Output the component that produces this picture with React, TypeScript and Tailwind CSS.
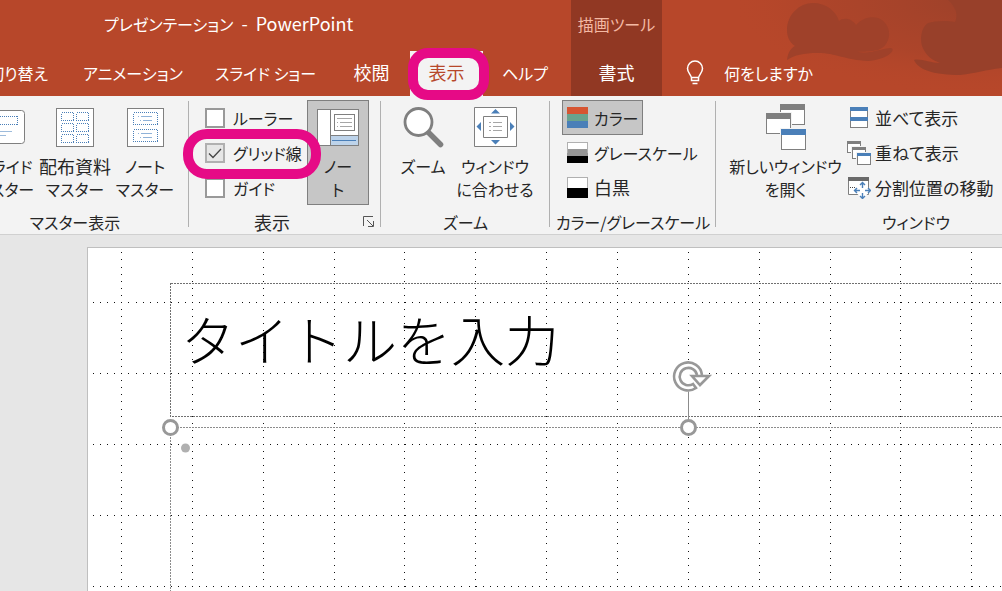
import type { ReactNode } from "react";
import clsx from "clsx";

const GRAY = "#7f7f7f";
const BLUE = "#4a7fb8";

const tabs = [
  { label: "切り替え", width: "w-[68px] justify-end pr-5" },
  { label: "アニメーション", width: "w-[130px] justify-center" },
  { label: "スライド ショー", width: "w-[135px] justify-center" },
  { label: "校閲", width: "w-[77px] justify-center" },
  { label: "表示", width: "w-[73px] justify-center", active: true },
  { label: "ヘルプ", width: "w-[84px] justify-center" },
];

// Labels made of kanji alone are set a step larger than those with kana.
function labelSize(label: string) {
  return /^[\u4e00-\u9fff]+$/.test(label) ? "text-[18px]" : "text-[16px]";
}

function Highlight({ className }: { className: string }) {
  return (
    <span
      aria-hidden="true"
      className={clsx("pointer-events-none absolute z-20 border-10 border-[#e60a86]", className)}
    />
  );
}

function HeaderArt() {
  return (
    <svg className="pointer-events-none absolute top-0 right-0" width="340" height="96" viewBox="662 0 340 96" aria-hidden="true">
      <defs>
        <radialGradient id="shade" gradientUnits="userSpaceOnUse" cx="980" cy="0" r="250" gradientTransform="matrix(1 0 0 .38 0 0)">
          <stop offset="0" stopColor="#98402a" stopOpacity=".85" />
          <stop offset=".6" stopColor="#a2422a" stopOpacity=".5" />
          <stop offset="1" stopColor="#b7472a" stopOpacity="0" />
        </radialGradient>
      </defs>
      <rect x="662" width="340" height="96" fill="url(#shade)" />
      <path
        fill="#9f412a"
        d="M787 60C788 52 791 48 795 46C789 42 787 36 787 30C787 15 799 3 813 3C826 3 836 11 839 21C843 17 852 18 856 25C862 18 871 16 878 18C886 21 890 29 889 36C888 43 884 48 878 50C862 53 860 51 858 52C872 54 882 48 891 48C897 50 886 60 868 61C845 60 836 53 818 53C803 53 795 55 787 60Z"
      />
      <path
        fill="#98402a"
        d="M1002 0H948C957 8 958 16 955 22C946 20 934 21 928 23C921 28 920 38 922 46C926 56 932 60 940 63C930 63 920 58 914 60C918 70 935 75 960 75C978 73 984 70 1002 68Z"
      />
    </svg>
  );
}

function BulbIcon() {
  return (
    <svg width="18" height="26" viewBox="0 0 18 26" fill="none" stroke="#fff" strokeWidth="1.5" aria-hidden="true">
      <path d="M5.5 18.5C5.5 14.500 1.500 13 1.500 8.500A7.500 7.500 0 0 1 16.500 8.500C16.500 13 12.500 14.500 12.500 18.500V20.500H5.500ZM5 17.500H13M6.500 23.500H11.500" />
    </svg>
  );
}

function SlideMasterIcon() {
  return (
    <svg width="40" height="34" viewBox="0 0 40 34" fill="none" aria-hidden="true">
      <rect x=".5" y=".5" width="39" height="33" rx="3" fill="#fff" stroke={GRAY} />
      <path d="M5 6.500H33M5 14.500H33M5.500 6V15M32.500 6V15" stroke={BLUE} strokeDasharray="1 1" />
      <path d="M12 21.500H27M12 25.500H21" stroke="#9dbbdb" />
    </svg>
  );
}

function HandoutIcon() {
  return (
    <svg width="38" height="39" viewBox="0 0 38 39" fill="none" shapeRendering="crispEdges" aria-hidden="true">
      <rect x=".5" y=".5" width="37" height="38" fill="#fff" stroke={GRAY} />
      {[4, 15, 26].map((y) =>
        [5, 20].map((x) => (
          <rect key={`${x}-${y}`} x={x + 0.5} y={y + 0.5} width="12" height="8" stroke={BLUE} strokeDasharray="1 1" />
        )),
      )}
    </svg>
  );
}

function NotesMasterIcon() {
  return (
    <svg width="37" height="39" viewBox="0 0 37 39" fill="none" shapeRendering="crispEdges" aria-hidden="true">
      <rect x=".5" y=".5" width="36" height="38" fill="#fff" stroke={GRAY} />
      {[4, 21].map((y) => (
        <g key={y}>
          <rect x="6.5" y={y + 0.5} width="24" height="12" stroke={BLUE} strokeDasharray="1 1" />
          <path d={`M11 ${y + 4.5}h1m2 0h11M13 ${y + 8.5}h1m2 0h9`} stroke="#8fb2d8" />
        </g>
      ))}
    </svg>
  );
}

function NotesPaneIcon() {
  return (
    <svg width="42" height="37" viewBox="0 0 42 37" fill="none" shapeRendering="crispEdges" aria-hidden="true">
      <rect x=".5" y=".5" width="41" height="36" fill="#fff" stroke={GRAY} />
      <rect x="13.5" y="26.5" width="28" height="10" fill="#bdd3ea" stroke={GRAY} />
      <path d="M13.5 0V37M17.5 5.500H37.500V21.500H17.500Z" stroke={GRAY} />
      <path d="M20 9.500H35M20 13.500h1m2 0H35M20 17.500h1m2 0H35" stroke="#a6a6a6" />
      <path d="M15 31.500H39" stroke={BLUE} />
    </svg>
  );
}

function ZoomIcon() {
  return (
    <svg width="41" height="41" viewBox="0 0 41 41" fill="none" stroke={GRAY} aria-hidden="true">
      <path d="M25 25L37.500 37.500" strokeWidth="5.500" strokeLinecap="round" />
      <circle cx="15.500" cy="15" r="13.500" fill="#fff" strokeWidth="2.800" />
    </svg>
  );
}

function FitIcon() {
  return (
    <svg width="43" height="40" viewBox="0 0 43 40" fill="none" aria-hidden="true">
      <path d="M.5.5H42.500V39.500H.5ZM9.500 9.500H33.500V30.500H9.500Z" fill="#fff" stroke={GRAY} />
      <path d="M21.500 2L26 6.500H17ZM21.500 37.500L26 33H17ZM2.500 19.500L7 15V24ZM40.500 19.500L36 15V24Z" fill={BLUE} />
      <path d="M15 15.500h2m2 0h9M15 19.500h2m2 0h9M15 23.500h2m2 0h9" stroke="#a6a6a6" />
    </svg>
  );
}

type WinProps = { x: number; y: number; w: number; h: number; bar: number; color?: string };

function Win({ x, y, w, h, bar, color = GRAY }: WinProps) {
  return (
    <g>
      <rect x={x - 1} y={y - 1} width={w + 2} height={h + 2} fill="#f3f3f3" />
      <rect x={x + 0.5} y={y + 0.5} width={w - 1} height={h - 1} fill="#fff" stroke={GRAY} />
      <rect x={x} y={y} width={w} height={bar} fill={color} />
    </g>
  );
}

function NewWindowIcon() {
  return (
    <svg width="40" height="46" viewBox="0 0 40 46" shapeRendering="crispEdges" aria-hidden="true">
      <Win x={14} y={0} w={25} h={21} bar={6} />
      <Win x={0} y={9} w={25} h={21} bar={6} />
      <Win x={15} y={25} w={25} h={21} bar={6} color={BLUE} />
    </svg>
  );
}

function ArrangeIcon() {
  return (
    <svg width="18" height="21" viewBox="0 0 18 21" shapeRendering="crispEdges" aria-hidden="true">
      <rect x=".5" y=".5" width="17" height="20" fill="#fff" stroke={GRAY} />
      <path d="M0 0H18V4H0ZM0 10H18V14H0Z" fill={BLUE} />
    </svg>
  );
}

function CascadeIcon() {
  return (
    <svg width="24" height="24" viewBox="0 0 24 24" shapeRendering="crispEdges" aria-hidden="true">
      <Win x={0} y={0} w={14} h={12} bar={3} />
      <Win x={5} y={6} w={14} h={12} bar={3} />
      <Win x={10} y={12} w={14} h={12} bar={3} color={BLUE} />
    </svg>
  );
}

function SplitIcon() {
  return (
    <svg width="24" height="22" viewBox="0 0 24 22" fill="none" aria-hidden="true">
      <path d="M1.500.500H21.500V17.500H1.500Z" fill="#fff" stroke={GRAY} />
      <path d="M1 0H22V4H1Z" fill="#6a6a6a" />
      <path d="M3 10.500H8" stroke="#444" strokeDasharray="1 1" />
      <path d="M15.500 5L24 13.500L15.500 22L7 13.500Z" fill="#fff" />
      <path
        d="M15.500 6V11M15.500 16V21M8 13.500H13M18 13.500H23M13 8L15.500 5.500L18 8M13 19L15.500 21.500L18 19M10 11L7.500 13.500L10 16M21 11L23.500 13.500L21 16"
        stroke={BLUE}
        strokeWidth="1.400"
      />
    </svg>
  );
}

function Swatch({ colors, outlined }: { colors: string[]; outlined?: boolean }) {
  const h = 21 / colors.length;
  return (
    <svg width="21" height="21" viewBox="0 0 21 21" shapeRendering="crispEdges" aria-hidden="true">
      {colors.map((c, i) => (
        <rect key={c} y={i * h} width="21" height={h} fill={c} />
      ))}
      {outlined && <path d="M.5 11V.5H20.500V11" fill="none" stroke="#b0b0b0" />}
    </svg>
  );
}

function Group({ label, className, launcher, children }: { label: string; className: string; launcher?: boolean; children: ReactNode }) {
  return (
    <section aria-label={label} className={clsx("relative flex shrink-0 flex-col", className)}>
      <div className="flex h-[110px] items-start">{children}</div>
      <div className="flex h-6 items-center">
        <span className={clsx("flex-1 text-center leading-6 whitespace-nowrap", launcher && "pr-2", labelSize(label))}>
          {label}
        </span>
        {launcher && (
          <button type="button" aria-label="表示の詳細" className="w-[18px]">
            <svg width="12" height="12" viewBox="0 0 12 12" fill="none" stroke="#555" aria-hidden="true">
              <path d="M.5 10V.5H10M4 4L10 10M10.500 5V10.500H5" />
            </svg>
          </button>
        )}
      </div>
      <span className="absolute top-px right-0 h-[126px] w-px bg-[#b0b0b0]" />
    </section>
  );
}

function BigButton({ icon, lines, className, pressed }: { icon: ReactNode; lines: string[]; className: string; pressed?: boolean }) {
  return (
    <button
      type="button"
      aria-pressed={pressed}
      className={clsx(
        "flex h-[105px] shrink-0 flex-col items-center border pt-1",
        pressed ? "border-[#7f7f7f] bg-[#c6c6c6]" : "border-transparent",
        className,
      )}
    >
      <span className="flex h-11 items-center justify-center">{icon}</span>
      <span className="mt-[6px] flex flex-col items-center whitespace-nowrap">
        {lines.map((line) => (
          <span key={line} className={clsx("leading-[23px]", labelSize(line))}>
            {line}
          </span>
        ))}
      </span>
    </button>
  );
}

function CheckRow({ label, checked, children }: { label: string; checked?: boolean; children?: ReactNode }) {
  return (
    <label className="relative flex h-[35px] items-center gap-2 whitespace-nowrap">
      <span className="relative flex size-5">
        <input
          type="checkbox"
          defaultChecked={checked}
          className="peer size-5 appearance-none border-2 border-[#999] bg-white checked:border-[#b0b0b0] checked:bg-[#e6e6e6]"
        />
        <svg className="absolute inset-0 hidden peer-checked:block" width="20" height="20" viewBox="0 0 20 20" fill="none" stroke="#444" strokeWidth="1.300" aria-hidden="true">
          <path d="M4 10.500L8 14.500L16 6" />
        </svg>
      </span>
      {label}
      {children}
    </label>
  );
}

function RowButton({ icon, label, pressed }: { icon: ReactNode; label: string; pressed?: boolean }) {
  return (
    <button
      type="button"
      aria-pressed={pressed}
      className={clsx(
        "flex h-[35px] items-center gap-[6px] border px-1 whitespace-nowrap",
        labelSize(label),
        pressed ? "border-[#7f7f7f] bg-[#c6c6c6]" : "border-transparent",
      )}
    >
      {icon}
      {label}
    </button>
  );
}

function WindowRow({ icon, label }: { icon: ReactNode; label: string }) {
  return (
    <button type="button" className="flex h-[35px] items-center gap-1 text-[17px] whitespace-nowrap">
      <span className="flex w-6 justify-center">{icon}</span>
      {label}
    </button>
  );
}

function TitleBar() {
  return (
    <header className="relative flex h-24 bg-[#b7472a] text-white">
      <HeaderArt />
      <div className="flex w-[571px] shrink-0 flex-col">
        <div className="flex h-[51px] items-center gap-2 pb-1 pl-[104px] text-[18px] whitespace-nowrap">
          <span className="text-[16px]">プレゼンテーション</span>
          <span>-</span>
          <span>PowerPoint</span>
        </div>
        <nav className="flex flex-1">
          {tabs.map((tab) => (
            <button
              key={tab.label}
              type="button"
              className={clsx(
                "relative flex h-[45px] shrink-0 items-center pb-0.5 whitespace-nowrap",
                labelSize(tab.label),
                tab.width,
                tab.active && "bg-[#f3f3f3] text-[#b7472a]",
              )}
            >
              {tab.label}
              {tab.active && <Highlight className="-top-[3px] -right-[6px] -bottom-1 -left-[2px] rounded-[20px]" />}
            </button>
          ))}
        </nav>
      </div>
      <div className="relative flex w-[91px] shrink-0 flex-col items-center bg-[#913823]">
        <span className="flex h-[51px] items-center pb-1 whitespace-nowrap text-[#f4b9a3]">描画ツール</span>
        <button type="button" className="h-[45px] w-full pb-0.5 text-[18px]">
          書式
        </button>
      </div>
      <button type="button" className="relative mt-[51px] flex h-[45px] items-center gap-5 pb-0.5 pl-6 whitespace-nowrap">
        <BulbIcon />
        何をしますか
      </button>
    </header>
  );
}

function Ribbon() {
  return (
    <div className="flex overflow-x-clip border-b border-[#d0d0d0] bg-[#f3f3f3] pt-1 text-[#262626]">
      <Group label="マスター表示" className="-ml-[30px] w-[219px] pr-[9px]">
        <BigButton className="w-[70px]" icon={<SlideMasterIcon />} lines={["スライド", "マスター"]} />
        <BigButton className="w-[70px]" icon={<HandoutIcon />} lines={["配布資料", "マスター"]} />
        <BigButton className="w-[70px]" icon={<NotesMasterIcon />} lines={["ノート", "マスター"]} />
      </Group>
      <Group label="表示" className="w-[192px]" launcher>
        <div className="w-[118px] pl-4">
          <CheckRow label="ルーラー" />
          <CheckRow label="グリッド線" checked>
            <Highlight className="-top-[6px] -right-[14px] -bottom-[9px] -left-[22px] rounded-[24px]" />
          </CheckRow>
          <CheckRow label="ガイド" />
        </div>
        <BigButton className="w-[62px]" pressed icon={<NotesPaneIcon />} lines={["ノー", "ト"]} />
      </Group>
      <Group label="ズーム" className="w-[169px]">
        <BigButton className="ml-[10px] w-16" icon={<ZoomIcon />} lines={["ズーム"]} />
        <BigButton className="w-20" icon={<FitIcon />} lines={["ウィンドウ", "に合わせる"]} />
      </Group>
      <Group label="カラー/グレースケール" className="w-[166px]">
        <div className="flex flex-col items-start pl-3">
          <RowButton label="カラー" pressed icon={<Swatch colors={["#d65532", "#69a38d", "#4a7fb8"]} />} />
          <RowButton label="グレースケール" icon={<Swatch outlined colors={["#fff", "#969696", "#000"]} />} />
          <RowButton label="白黒" icon={<Swatch outlined colors={["#fff", "#000"]} />} />
        </div>
      </Group>
      <Group label="ウィンドウ" className="w-[400px]">
        <BigButton className="ml-2 w-[123px]" icon={<NewWindowIcon />} lines={["新しいウィンドウ", "を開く"]} />
        <div className="flex flex-col items-start">
          <WindowRow icon={<ArrangeIcon />} label="並べて表示" />
          <WindowRow icon={<CascadeIcon />} label="重ねて表示" />
          <WindowRow icon={<SplitIcon />} label="分割位置の移動" />
        </div>
      </Group>
    </div>
  );
}

// Guides repeat once per cell, with ten dots to a cell.
const CELL_X = 70.85;
const CELL_Y = 71;

function Gridlines() {
  const cells = Array.from({ length: 30 }, (_, i) => i);
  return (
    <g stroke="#111" shapeRendering="crispEdges">
      {cells.map((i) => (
        <g key={i}>
          <path d={`M${33.5 + i * CELL_X} 4.300V2000`} strokeDasharray="1 6.1" />
          <path d={`M5 ${54.5 + i * CELL_Y}H2200`} strokeDasharray="1 6.085" />
        </g>
      ))}
    </g>
  );
}

function Slide() {
  return (
    <main className="flex flex-1 overflow-hidden pt-3 pl-[87px]">
      <div className="relative flex-1 overflow-hidden border-t border-l border-[#bfbfbf] bg-white">
        <svg className="absolute inset-0 size-full" aria-hidden="true">
          <Gridlines />
          <g fill="none" strokeDasharray="2 1" shapeRendering="crispEdges">
            <rect x="82.500" y="35.500" width="2200" height="133" stroke="#707070" />
            <rect x="82.500" y="179.500" width="2200" height="1200" stroke="#8c8c8c" />
          </g>
          <path d="M600.500 143V173" stroke="#8c8c8c" />
          <g fill="#fff" stroke="#989898" strokeWidth="3">
            <circle cx="82.500" cy="179.500" r="7" />
            <circle cx="600.500" cy="179.500" r="7" />
          </g>
          <circle cx="97.500" cy="200" r="4.500" fill="#b0b0b0" />
          <g transform="translate(600.5 128.5)">
            <circle r="15" fill="#fff" />
            <g fill="none" stroke="#989898" strokeWidth="2.600">
              <path d="M13.500 -1.500A14 14 0 1 0 7.500 11.500L4.500 7.500A8.700 8.700 0 1 1 8.500 -1.500" />
            </g>
            <path d="M3.500 -.5H20.500L11.500 8.500Z" fill="#fff" stroke="#989898" strokeWidth="2.600" />
          </g>
        </svg>
        <h1 className="relative pt-[53px] pl-[93px] text-[54px] leading-[76px] font-light whitespace-nowrap text-black">
          タイトルを入力
        </h1>
      </div>
    </main>
  );
}

export default function App() {
  return (
    <div className="flex min-h-screen flex-col overflow-hidden bg-[#e6e6e6] font-['Noto_Sans_CJK_JP',sans-serif] text-[16px]">
      <div className="[font-feature-settings:'palt']">
        <TitleBar />
        <Ribbon />
      </div>
      <Slide />
    </div>
  );
}
